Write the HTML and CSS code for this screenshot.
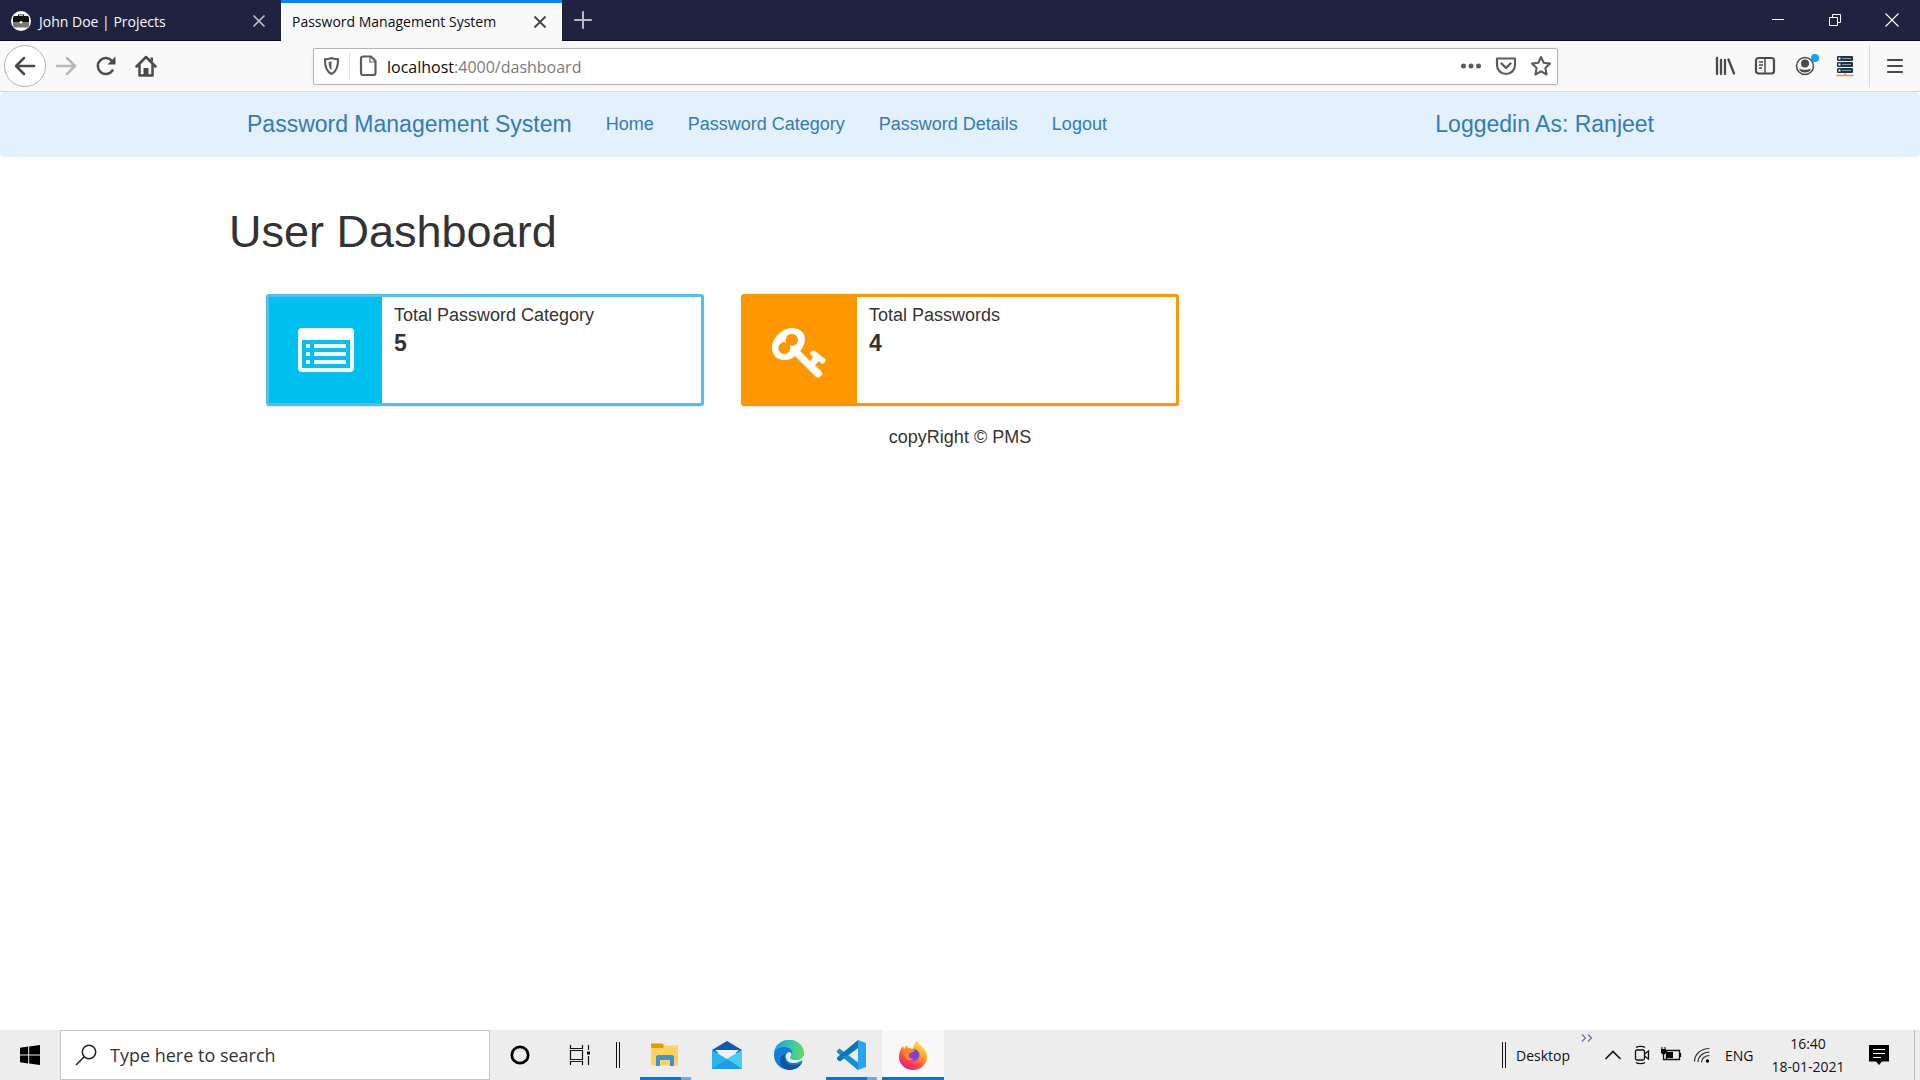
FILE: index.html
```html
<!DOCTYPE html>
<html lang="en">
<head>
<meta charset="utf-8">
<title>Password Management System</title>
<link rel="stylesheet" href="styles.css">
</head>
<body>
<header class="browser">
  <div class="tabbar">
    <div class="tab">
      <svg class="favicon" width="20" height="20" viewBox="0 0 20 20"><circle cx="10" cy="10" r="10" fill="#fff"/><path d="M7 5V3.500h6V5h3.500c1 0 1.500 1 1.500 2v4.500H2V7c0-1 .5-2 1.500-2z" fill="#111"/><path d="M8 5v-.700h4V5z" fill="#fff"/><path d="M2 11.500h16V14c0 1.500-1 2.500-2 2.500H4c-1 0-2-1-2-2.500z" fill="#777"/><circle cx="10" cy="11.300" r="1.300" fill="#fff"/></svg>
      <span class="tab-title">John Doe | Projects</span>
      <button class="icon-btn" aria-label="Close tab"><svg width="14" height="14" viewBox="0 0 14 14"><path d="M1.500 1.500l11 11m0-11l-11 11" stroke="#bfbfc9" stroke-width="1.600"/></svg></button>
    </div>
    <div class="tab tab-active">
      <span class="tab-title">Password Management System</span>
      <button class="icon-btn" aria-label="Close tab"><svg width="14" height="14" viewBox="0 0 14 14"><path d="M1.500 1.500l11 11m0-11l-11 11" stroke="#444" stroke-width="1.800"/></svg></button>
    </div>
    <button class="icon-btn new-tab" aria-label="New tab"><svg width="18" height="18" viewBox="0 0 18 18"><path d="M9 1v16M1 9h16" stroke="#b9b9c2" stroke-width="2" stroke-linecap="round"/></svg></button>
    <div class="window-controls">
      <button class="win-btn" aria-label="Minimize"><svg width="14" height="14" viewBox="0 0 14 14"><path d="M1 6.500h12" stroke="#fff"/></svg></button>
      <button class="win-btn" aria-label="Restore"><svg width="14" height="14" viewBox="0 0 14 14"><path d="M1.500 4.500h8v8h-8zM4.500 4V1.500h8v8H10" fill="none" stroke="#fff"/></svg></button>
      <button class="win-btn" aria-label="Close"><svg width="14" height="14" viewBox="0 0 14 14"><path d="M.500.500l13 13m0-13l-13 13" stroke="#fff" stroke-width="1.100"/></svg></button>
    </div>
  </div>
  <div class="toolbar">
    <div class="nav-buttons">
      <button class="icon-btn back" aria-label="Back"><svg width="22" height="22" viewBox="0 0 22 22"><path d="M20 11H2.500M10 3l-8 8 8 8" fill="none" stroke="#4a4a4b" stroke-width="2.500" stroke-linecap="round" stroke-linejoin="round"/></svg></button>
      <button class="icon-btn" aria-label="Forward"><svg width="22" height="22" viewBox="0 0 22 22"><path d="M2 11h17.500M12 3l8 8-8 8" fill="none" stroke="#b8b8b9" stroke-width="2.500" stroke-linecap="round" stroke-linejoin="round"/></svg></button>
      <button class="icon-btn" aria-label="Reload"><svg width="22" height="22" viewBox="0 0 22 22"><path d="M17.500 15.500A8 8 0 1 1 17 6" fill="none" stroke="#4a4a4b" stroke-width="2.500" stroke-linecap="round"/><path d="M20.500 1.500V9.500H12.500z" fill="#4a4a4b"/></svg></button>
      <button class="icon-btn" aria-label="Home"><svg width="22" height="22" viewBox="0 0 22 22"><path d="M1.500 11.500L11 2l9.500 9.500M4.500 10v10.500h13V10" fill="none" stroke="#4a4a4b" stroke-width="2.500" stroke-linecap="round" stroke-linejoin="round"/><path d="M8.500 20v-7h5v7z" fill="#4a4a4b"/><path d="M15.500 2.500H18V7l-2.500-2z" fill="#4a4a4b"/></svg></button>
    </div>
    <div class="urlbar">
      <button class="icon-btn" aria-label="Protection"><svg width="17" height="20" viewBox="0 0 18 20"><path d="M9 1.500c2.500 1 4.500 1.500 7 1.500 0 7-1 12.500-7 15.500C3 15.500 2 10 2 3c2.500 0 4.500-.5 7-1.500z" fill="none" stroke="#5c5c5d" stroke-width="2.200" stroke-linejoin="round"/><path d="M9 5v9.500C6.500 12.500 6 9.500 6 6z" fill="#5c5c5d"/></svg></button>
      <span class="url-divider"></span>
      <svg class="doc" width="18" height="22" viewBox="0 0 18 22"><path d="M4 1.500h8l4.500 4.500v12a2 2 0 0 1-2 2H4a2 2 0 0 1-2-2v-14.500a2 2 0 0 1 2-2z" fill="none" stroke="#5c5c5d" stroke-width="2.200" stroke-linejoin="round"/><path d="M11 2v5h5" fill="none" stroke="#5c5c5d" stroke-width="1.200"/></svg>
      <span class="url">localhost<span class="url-path">:4000/dashboard</span></span>
      <button class="icon-btn" aria-label="Page actions"><svg width="22" height="22" viewBox="0 0 22 22" fill="#5c5c5d"><circle cx="3.500" cy="11" r="2.500"/><circle cx="11" cy="11" r="2.500"/><circle cx="18.500" cy="11" r="2.500"/></svg></button>
      <button class="icon-btn" aria-label="Save to Pocket"><svg width="22" height="22" viewBox="0 0 22 22"><path d="M2 3.500h18V10a9 9 0 0 1-18 0z" fill="none" stroke="#5c5c5d" stroke-width="2.200" stroke-linejoin="round"/><path d="M6.500 8.500l4.500 4.500 4.500-4.500" fill="none" stroke="#5c5c5d" stroke-width="2.400" stroke-linecap="round" stroke-linejoin="round"/></svg></button>
      <button class="icon-btn" aria-label="Bookmark"><svg width="22" height="22" viewBox="0 0 22 22"><path d="M11 2l2.700 5.800 6.300.8-4.600 4.400 1.200 6.500L11 16.300 5.400 19.500 6.600 13 2 8.600l6.300-.8z" fill="none" stroke="#5c5c5d" stroke-width="2.100" stroke-linejoin="round"/></svg></button>
    </div>
    <div class="tools">
      <button class="icon-btn" aria-label="Library"><svg width="22" height="22" viewBox="0 0 22 22" stroke="#4a4a4b" stroke-width="2.300" stroke-linecap="round"><path d="M3 3v16M7 5v14M11 5v14M14.500 4.500L20 18.500"/></svg></button>
      <button class="icon-btn" aria-label="Sidebars"><svg width="22" height="22" viewBox="0 0 22 22"><rect x="2" y="3" width="18" height="15.500" rx="2.500" fill="none" stroke="#4a4a4b" stroke-width="2.200"/><path d="M11 3v15" stroke="#4a4a4b" stroke-width="1.500"/><path d="M5 7h4M5 10h4M5 13h3" stroke="#4a4a4b" stroke-width="1.400"/></svg></button>
      <button class="icon-btn account" aria-label="Account"><svg width="22" height="22" viewBox="0 0 22 22"><circle cx="11" cy="11" r="8.500" fill="none" stroke="#4a4a4b" stroke-width="1.500"/><circle cx="11" cy="8.500" r="4" fill="#4a4a4b"/><path d="M5 13.500c3 1.800 9 1.800 12 0-1 3-3 4-6 4s-5-1-6-4z" fill="#4a4a4b"/></svg><span class="badge"></span></button>
      <button class="icon-btn" aria-label="Server extension"><svg width="22" height="22" viewBox="0 0 22 22"><rect x="3" y="1" width="16" height="5" rx="1" fill="#20344e"/><rect x="3" y="7" width="16" height="5" rx="1" fill="#20344e"/><rect x="3" y="13" width="16" height="5" rx="1" fill="#20344e"/><path d="M8 3.500h9M8 9.500h9M8 15.500h9" stroke="#8d9bac"/><path d="M4.500 3.500h2M4.500 9.500h2M4.500 15.500h2" stroke="#fff" stroke-width="2"/><path d="M2.500 20.500h17M11 18v2" stroke="#ff8b2c" stroke-width="1.300"/></svg></button>
      <button class="icon-btn menu" aria-label="Menu"><svg width="22" height="22" viewBox="0 0 22 22"><path d="M4 5h14M4 11h14M4 17h14" stroke="#4a4a4b" stroke-width="2.200" stroke-linecap="round"/></svg></button>
    </div>
  </div>
</header>

<div class="page">
  <nav class="navbar">
    <div class="container navbar-inner">
      <a class="brand" href="#">Password Management System</a>
      <a class="nav-link" href="#">Home</a>
      <a class="nav-link" href="#">Password Category</a>
      <a class="nav-link" href="#">Password Details</a>
      <a class="nav-link" href="#">Logout</a>
      <a class="brand user" href="#">Loggedin As: Ranjeet</a>
    </div>
  </nav>
  <main class="container">
    <h1 class="title">User Dashboard</h1>
    <div class="cards">
      <section class="card card-blue">
        <div class="card-icon"><svg width="58" height="58" viewBox="0 0 58 58"><path fill="#fff" fill-rule="evenodd" d="M5 5h48a4 4 0 0 1 4 4v36a4 4 0 0 1-4 4H5a4 4 0 0 1-4-4V9a4 4 0 0 1 4-4zM5 17v28h48V17z"/><path fill="#fff" d="M9 21h4v4H9zM9 29h4v4H9zM9 37h4v4H9zM17 21h32v4H17zM17 29h32v4H17zM17 37h32v4H17z"/></svg></div>
        <div class="card-body"><span class="label">Total Password Category</span><strong class="count">5</strong></div>
      </section>
      <section class="card card-orange">
        <div class="card-icon"><svg width="58" height="58" viewBox="0 0 58 58"><path fill="#fff" fill-rule="evenodd" d="M20 5C10 5 0 15 0 25c0 7 5 12 12 12 4 0 8-1 11-4l20 20c2 2 4 2 5 1l1-1c2-2 1-4 0-5l-6-6 4-4 2 2c1 1 2 1 3 0l1-1c1-1 1-2 0-3L43 28c-1-1-2-1-3 0l-1 1c-1 1-1 2 0 3l2 2-3 4-10-10c3-3 5-8 5-12 0-7-6-11-13-11zm0 6a6 6 0 1 1-2.200 11.600A6 6 0 1 1 14.200 19.400 6 6 0 0 1 20 11z"/></svg></div>
        <div class="card-body"><span class="label">Total Passwords</span><strong class="count">4</strong></div>
      </section>
    </div>
  </main>
  <footer class="copyright">copyRight © PMS</footer>
</div>

<div class="taskbar">
  <button class="start" aria-label="Start"><svg width="20" height="20" viewBox="0 0 20 20"><path d="M0 2.800L8.200 1.600v7.900H0zM9.200 1.500L20 0v9.500H9.200zM0 10.500h8.200v7.900L0 17.200zM9.200 10.500H20V20L9.200 18.500z"/></svg></button>
  <label class="search">
    <svg width="22" height="22" viewBox="0 0 22 22"><circle cx="14" cy="8" r="6.700" fill="none" stroke="#222" stroke-width="1.500"/><path d="M9.300 12.700L1 21" stroke="#222" stroke-width="1.600"/></svg>
    <input type="text" placeholder="Type here to search" aria-label="Type here to search">
  </label>
  <div class="task-tools">
    <button class="task-btn" aria-label="Cortana"><svg width="20" height="20" viewBox="0 0 20 20"><circle cx="10" cy="10" r="8.200" fill="none" stroke="#000" stroke-width="2.700"/></svg></button>
    <button class="task-btn" aria-label="Task view"><svg width="22" height="20" viewBox="0 0 22 20"><path d="M1.500 0v3.500h12V0M1.500 20v-3.500h12V20M1.500 5.500h12v9h-12zM19.500 0v5M19.500 11v9" fill="none" stroke="#111" stroke-width="1.200"/><path d="M18 6.500h3v3h-3z"/></svg></button>
  </div>
  <span class="grip"></span>
  <div class="apps">
    <button class="app app-open" aria-label="File Explorer"><svg width="30" height="30" viewBox="0 0 30 30"><path d="M1 3.500h12l1 3-1 2H1z" fill="#e09c00"/><path d="M1 8h12l2-2.500h13V24c0 1-1 1.500-2 1.500H3c-1 0-2-.5-2-1.500z" fill="#ffd35b"/><path d="M6 26V17c0-1 1-2 2-2h14c1 0 2 1 2 2v9h-4v-6H10v6z" fill="#3a92dc"/></svg></button>
    <button class="app" aria-label="Mail"><svg width="30" height="30" viewBox="0 0 30 30"><path d="M0 10L15 1l15 9-3 3H3z" fill="#0a5fb3"/><path d="M3 10h24L15 21z" fill="#f1f1f5"/><path d="M0 10l15 9 15-9v19H0z" fill="#28b4ef"/><path d="M30 10v19L15 19z" fill="#4bcbf8"/><path d="M0 29l15-10 15 10z" fill="#1c9de6"/></svg></button>
    <button class="app" aria-label="Edge"><svg width="30" height="30" viewBox="0 0 30 30"><defs><linearGradient id="edge-top"><stop offset="0" stop-color="#239bd7"/><stop offset=".5" stop-color="#34c3bf"/><stop offset="1" stop-color="#65dc50"/></linearGradient></defs><circle cx="15" cy="15" r="15" fill="#0c7fd6"/><path d="M0 13C1 5 7 0 15 0c9 0 15 6 15 13 0 5-4 7-8 7-4 0-6-1-6-3 2-1 3-3 2-6C14 5 4 6 0 13z" fill="url(#edge-top)"/><path d="M11 14c-2 6 2 11 9 11 3 0 6-1 8-2-3 5-8 7-13 7-6-1-9-5-9-9 0-3 2-6 5-7z" fill="#10529f"/><path d="M16 12c-3 0-5 3-4 6 1 4 4 5 8 5 3 0 5-1 7-2 1-1 2 0 1 2l2-1v-7c-2 4-5 5-8 5-4 0-6-1-6-3 2-1 2-4 0-5z" fill="#ededed"/></svg></button>
    <button class="app app-open" aria-label="Visual Studio Code"><svg width="30" height="30" viewBox="0 0 30 30"><path d="M1 10.500L3.500 8.500 22 22.500V30L1 12.500z" fill="#118fd8"/><path d="M22 0v8L4 21.500l-3-2v-2z" fill="#0877b9"/><path d="M11 15.500L22 24v6L6 16z" fill="#118fd8"/><path d="M22 0l8 3v24l-8 3z" fill="#27a5f3"/></svg></button>
    <button class="app app-current" aria-label="Firefox"><svg width="30" height="30" viewBox="0 0 30 30"><defs><linearGradient id="fox" x1=".8" y1="0" x2=".2" y2="1"><stop offset="0" stop-color="#fff04a"/><stop offset=".4" stop-color="#ff9b27"/><stop offset=".7" stop-color="#ff4350"/><stop offset="1" stop-color="#df187a"/></linearGradient></defs><path d="M18 1c2 1 4 3 5 5 4 3 6 6 6 11a14 13 0 0 1-28 0c0-4 1-8 4-11l1 3 3-4 1 3c2 0 4 0 5 1 1-3 1-5 3-8z" fill="url(#fox)"/><circle cx="15.500" cy="15" r="6" fill="#8140d8"/><path d="M5 10c4-2 8-1 12 0-1 2-3 2-5 3-3 3 0 6 4 6-5 3-10 0-10-5z" fill="#ff882f"/></svg></button>
  </div>
  <div class="tray">
    <span class="grip"></span>
    <span class="desktop">Desktop</span>
    <svg class="more" width="12" height="8" viewBox="0 0 12 8"><path d="M1 .5L4.500 4 1 7.500M7 .5L10.500 4 7 7.500" fill="none" stroke="#6d6db0" stroke-width="1.300"/></svg>
    <button class="tray-btn" aria-label="Hidden icons"><svg width="18" height="22" viewBox="0 0 18 22"><path d="M1.500 15L9 7.500l7.500 7.500" fill="none" stroke="#111" stroke-width="1.600"/></svg></button>
    <button class="tray-btn" aria-label="Meet now"><svg width="18" height="22" viewBox="0 0 18 22" fill="none" stroke="#111" stroke-width="1.300"><rect x="2.500" y="6" width="9" height="10" rx="1.500"/><path d="M11.500 10l4-3v8l-4-3M3 3.500c2-1.500 7-1.500 9 0M3 18.500c2 1.500 7 1.500 9 0"/></svg></button>
    <button class="tray-btn battery" aria-label="Battery"><svg width="22" height="22" viewBox="0 0 22 22"><path d="M6.500 6.500h13v9h-13zM20.500 9v4M3.500 10v5.500H7" fill="none" stroke="#111" stroke-width="1.300"/><path d="M7 8h6v6H7zM1 5h5v4l-2.500 2L1 9zM1.500 3h1v2h-1zM4.500 3h1v2h-1z"/></svg></button>
    <button class="tray-btn" aria-label="Network"><svg width="18" height="22" viewBox="0 0 18 22"><path d="M1.500 17.500C1.500 10 8 4.500 16.500 4.500M5 18c0-5.500 5-10 11.500-10M8.500 18.500c0-4 3.500-7 8-7" fill="none" stroke="#333" stroke-width="1.200"/><circle cx="14.500" cy="17" r="1.700"/></svg></button>
    <span class="lang">ENG</span>
    <time class="clock"><span>16:40</span><span>18-01-2021</span></time>
    <button class="tray-btn notify" aria-label="Notifications"><svg width="20" height="20" viewBox="0 0 20 20"><path d="M0 0h20v16.500h-7L10 20l-3-3.500H0z"/><path d="M4 4.500h12M4 8.500h12M4 12.500h8" stroke="#fff"/></svg></button>
    <span class="show-desktop"></span>
  </div>
</div>
</body>
</html>
```
FILE: styles.css
```css
* { box-sizing: border-box; }

body {
  margin: 0;
  min-height: 100vh;
  display: flex;
  flex-direction: column;
  background: #fff;
  color: #333;
  font: 18px/25px "Liberation Sans", Arial, sans-serif;
}

svg { display: block; }
a { text-decoration: none; }

button {
  padding: 0;
  border: 0;
  background: none;
  font: inherit;
}

/* Browser window */
.browser, .taskbar { font-family: "Open Sans", "Noto Sans", sans-serif; }

.tabbar {
  display: flex;
  height: 41px;
  background: #20233f;
  border-bottom: 1px solid #0c0c1f;
}

.tab {
  display: flex;
  align-items: center;
  gap: 8px;
  width: 281px;
  padding: 2px 15px 0 11px;
  color: #f9f9fa;
  font-size: 14px;
}

.tab-active {
  margin-bottom: -1px;
  border-top: 3px solid #0a84ff;
  padding-bottom: 3px;
  background: #f9f9fa;
  color: #0c0c0d;
}

.tab-title { flex: 1; white-space: nowrap; }

.icon-btn {
  position: relative;
  display: flex;
  flex: none;
  align-items: center;
  justify-content: center;
}

.new-tab { width: 42px; }

.window-controls { display: flex; margin-left: auto; }

.win-btn {
  display: flex;
  align-items: center;
  justify-content: center;
  width: 57px;
}

.toolbar {
  display: flex;
  align-items: center;
  height: 51px;
  padding: 0 14px 0 4px;
  background: #f9f9fa;
  border-bottom: 1px solid #d5d7da;
}

.nav-buttons { display: flex; align-items: center; gap: 18px; width: 309px; }

.back {
  width: 42px;
  height: 42px;
  margin-right: -9px;
  border: 1px solid #b3b3b4;
  border-radius: 50%;
  background: #fff;
}

.urlbar {
  display: flex;
  flex: 1;
  align-items: center;
  gap: 9px;
  height: 37px;
  padding: 0 5px 0 9px;
  border: 1px solid #b4b4b6;
  border-radius: 2px;
  background: #fff;
  box-shadow: 0 1px 4px rgba(0, 0, 0, .06);
}

.urlbar .icon-btn + .icon-btn { margin-left: 4px; }
.url-divider { width: 1px; height: 26px; background: #dfdfe0; }
.url { flex: 1; padding-top: 2px; color: #0c0c0d; font-size: 16px; }
.url-path { color: #7b7b7c; }
.doc { margin-right: 1px; }

.tools { display: flex; align-items: center; gap: 18px; margin-left: 156px; }

.badge {
  position: absolute;
  top: -1px;
  right: -3px;
  width: 8px;
  height: 8px;
  border-radius: 50%;
  background: #00a8ff;
}

.menu {
  height: 42px;
  padding-left: 14px;
  margin-left: -5px;
  border-left: 1px solid #d9d9da;
}

/* Application */
.page { flex: 1; }

.container {
  width: 100%;
  max-width: 1462px;
  margin: 0 auto;
}

.navbar {
  padding: 0 15px;
  border-radius: 5px;
  background: #e3f1fd;
}

.navbar-inner {
  display: flex;
  align-items: center;
  gap: 34px;
  min-height: 65px;
  padding: 0 37px 0 18px;
}

.brand, .nav-link { color: #337ab7; white-space: nowrap; }
.brand { font-size: 23px; }
.user { margin-left: auto; }

.title {
  margin: 50px 0 37px;
  font-size: 45px;
  line-height: 50px;
  font-weight: 400;
}

.cards {
  display: grid;
  grid-template-columns: repeat(3, 1fr);
  gap: 37px;
  padding: 0 37px;
}

.card {
  display: flex;
  min-height: 112px;
  border: 3px solid;
  border-radius: 3px;
  box-shadow: 0 1px 1px rgba(0, 0, 0, .1);
}

.card-blue { border-color: #4fbfee; }
.card-orange { border-color: #ff9800; }

.card-icon {
  display: flex;
  align-items: center;
  justify-content: center;
  width: 113px;
  padding-top: 4px;
}

.card-blue .card-icon { background: #00c0ef; }
.card-orange .card-icon { background: #ff9800; }

.card-body {
  display: flex;
  flex-direction: column;
  padding: 6px 12px;
}

.count { color: #333; font-size: 23px; line-height: 30px; }

.copyright { margin-top: 19px; text-align: center; }

/* Desktop taskbar */
.taskbar {
  display: flex;
  align-items: stretch;
  height: 50px;
  background: #ededed;
  color: #111;
}

.taskbar button {
  display: flex;
  align-items: center;
  justify-content: center;
}

.start { width: 60px; }

.search {
  display: flex;
  align-items: center;
  gap: 13px;
  width: 430px;
  padding: 0 14px;
  border: 1px solid #c5c5c5;
  background: #fff;
}

.search input {
  flex: 1;
  min-width: 0;
  padding: 0;
  border: 0;
  background: none;
  font: 18px/24px "Open Sans", "Noto Sans", sans-serif;
}

.search input::placeholder { color: #333; }

.task-tools { display: flex; }
.task-btn { width: 60px; }

.grip {
  align-self: center;
  width: 4px;
  height: 26px;
  margin: 0 6px;
  border: solid #111;
  border-width: 0 1px;
}

.apps { display: flex; margin-left: 8px; }

.app {
  width: 62px;
}

.app-open {
  background: linear-gradient(90deg, #0078d7 80%, #66ade6 80%) center bottom / 51px 3px no-repeat;
}

.app-current {
  background: linear-gradient(#0078d7, #0078d7) center bottom / 100% 3px no-repeat, #f8f8f8;
}

.tray {
  display: flex;
  align-items: center;
  margin-left: auto;
  font-size: 14px;
}

.desktop { margin: 0 11px 0 4px; }
.more { align-self: flex-start; margin-top: 4px; }
.tray-btn { margin-left: 11px; }
.battery { margin-left: 9px; }
.lang { width: 30px; margin-left: 14px; }

.clock {
  display: flex;
  flex-direction: column;
  width: 82px;
  margin-left: 12px;
  line-height: 23px;
  text-align: center;
}

.notify { margin: 0 25px 0 20px; }

.show-desktop {
  align-self: stretch;
  width: 6px;
  border-left: 1px solid #b8b8b8;
}
```
